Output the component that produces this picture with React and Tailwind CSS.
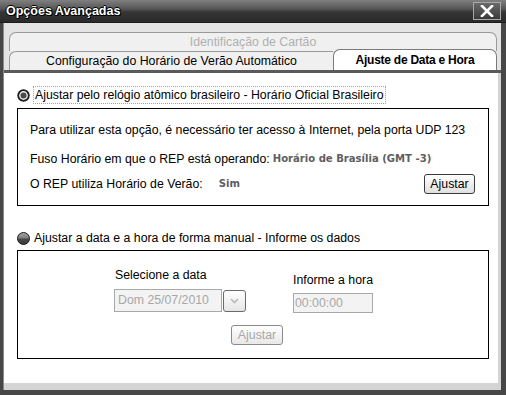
import React from "react";

function RadioOn() {
  return (
    <svg width="13" height="13" viewBox="0 0 13 13" className="shrink-0">
      <circle cx="6.5" cy="6.5" r="6.2" fill="#1e1e1e" />
      <circle cx="6.5" cy="6.5" r="4.4" fill="#ececec" />
      <circle cx="6.5" cy="6.5" r="3" fill="#4a4a4a" />
    </svg>
  );
}

function RadioOff() {
  return (
    <svg width="13" height="13" viewBox="0 0 13 13" className="shrink-0">
      <defs>
        <linearGradient id="rg" x1="0" y1="0" x2="0" y2="1">
          <stop offset="0" stopColor="#a8a8a8" />
          <stop offset="0.48" stopColor="#7c7c7c" />
          <stop offset="0.52" stopColor="#4a4a4a" />
          <stop offset="1" stopColor="#3a3a3a" />
        </linearGradient>
      </defs>
      <circle cx="6.5" cy="6.5" r="6" fill="url(#rg)" stroke="#1a1a1a" strokeWidth="1" />
    </svg>
  );
}

const boldGray = { fontFamily: '"DejaVu Sans Condensed", "DejaVu Sans", sans-serif' };

export default function App() {
  return (
    <div
      className="w-[506px] h-[395px] bg-[#474747] flex flex-col overflow-hidden"
      style={{ fontFamily: '"Liberation Sans", Arial, sans-serif' }}
    >
      {/* Title bar */}
      <div className="h-[23px] shrink-0 flex items-center justify-between pl-[6px] pr-[5px] bg-[linear-gradient(#808080_0%,#565656_40%,#353535_55%,#2a2a2a_100%)] border-b border-[#1c1c1c]">
        <span className="text-white font-bold text-[12.5px] leading-none [text-shadow:1px_1px_0_#000,-1px_0_0_#000,0_-1px_0_#000,1px_0_0_#000,0_1px_0_#000]">
          Opções Avançadas
        </span>
        <div className="w-[28px] h-[18px] mt-[-1px] border border-[#a8a8a8] bg-[linear-gradient(#6a6a6a,#3a3a3a)] flex items-center justify-center">
          <svg width="14" height="12" viewBox="0 0 14 12">
            <path d="M2 1 L12 11 M12 1 L2 11" stroke="#fff" strokeWidth="2.6" strokeLinecap="square" />
          </svg>
        </div>
      </div>

      {/* Body */}
      <div className="flex-1 ml-[3px] mr-[5px] mb-[5px] flex flex-col bg-[#e4e4e4] border-l border-[#8a8a8a]">
        {/* Tabs */}
        <div className="pt-[9px] pl-[5px] pr-[4px] flex flex-col">
          <div className="h-[19px] rounded-t-[7px] border border-b-0 border-[#9a9a9a] bg-[#f0f0f0] flex items-center justify-center text-[12.3px] text-[#b0b0b0]">
            Identificação de Cartão
          </div>
          <div className="flex h-[19px]">
            <div className="w-[324px] rounded-tl-[7px] border border-b-0 border-r-0 border-[#9a9a9a] bg-[#f0f0f0] flex items-center justify-center text-[12.3px] text-black">
              Configuração do Horário de Verão Automático
            </div>
            <div className="flex-1 -mt-[2px] rounded-t-[7px] border border-b-0 border-[#7a7a7a] bg-white flex items-center justify-center text-[12px] font-bold tracking-[-0.25px] text-black">
              Ajuste de Data e Hora
            </div>
          </div>
        </div>
        <div className="h-[3px] bg-[#5a5a5a]" />

        {/* Panel */}
        <div className="flex-1 bg-white border-b-[7px] border-r-[3px] border-[#d4d4d4] flex flex-col text-[12.3px] text-black">
          <div className="mt-[13px] ml-[13px] h-[18px] flex items-center">
            <RadioOn />
            <span className="ml-[3px] h-[18px] px-[1px] flex items-center border border-dotted border-[#e0a020]">
              Ajustar pelo relógio atômico brasileiro - Horário Oficial Brasileiro
            </span>
          </div>

          <div className="mt-[4px] ml-[13px] w-[472px] h-[98px] border border-black flex flex-col pl-[12px] pr-[13px]">
            <div className="mt-[13px] h-[16px] flex items-center">
              Para utilizar esta opção, é necessário ter acesso à Internet, pela porta UDP 123
            </div>
            <div className="mt-[13px] h-[16px] flex items-center">
              Fuso Horário em que o REP está operando:
              <span className="ml-[3px] font-bold text-[11.2px] text-[#5e5e5e]" style={boldGray}>
                Horário de Brasília (GMT -3)
              </span>
            </div>
            <div className="mt-[7px] h-[20px] flex items-center justify-between">
              <div className="flex items-center">
                O REP utiliza Horário de Verão:
                <span className="ml-[16px] font-bold text-[11.2px] text-[#5e5e5e]" style={boldGray}>
                  Sim
                </span>
              </div>
              <button className="w-[51px] h-[20px] rounded-[3px] border border-[#3a3a3a] bg-[linear-gradient(#ffffff,#e0e0e0)] text-[12.3px] text-black flex items-center justify-center">
                Ajustar
              </button>
            </div>
          </div>

          <div className="mt-[23px] ml-[13px] h-[18px] flex items-center">
            <RadioOff />
            <span className="ml-[4px]">Ajustar a data e a hora de forma manual - Informe os dados</span>
          </div>

          <div className="mt-[3px] ml-[13px] w-[472px] h-[109px] border border-black flex flex-col pl-[96px]">
            <div className="flex">
              <div className="w-[179px] flex flex-col pt-[16px]">
                <div className="h-[16px] flex items-center pl-[1px]">Selecione a data</div>
                <div className="mt-[6px] flex items-center">
                  <div className="w-[108px] h-[23px] border border-[#a8a8a8] bg-[#f3f3f3] flex items-center pl-[3px] text-[#a8a8a8]">
                    Dom 25/07/2010
                  </div>
                  <div className="ml-[1px] w-[23px] h-[22px] rounded-[3px] border border-[#6a6a6a] bg-[linear-gradient(#ffffff,#e6e6e6)] flex items-center justify-center">
                    <svg width="9" height="6" viewBox="0 0 9 6">
                      <path d="M1 1 L4.5 4.5 L8 1" stroke="#b8b8b8" strokeWidth="1.6" fill="none" />
                    </svg>
                  </div>
                </div>
              </div>
              <div className="flex flex-col pt-[21px]">
                <div className="h-[16px] flex items-center">Informe a hora</div>
                <div className="mt-[5px] w-[80px] h-[20px] border border-[#a8a8a8] bg-[#f3f3f3] flex items-center pl-[1px] text-[#a8a8a8]">
                  00:00:00
                </div>
              </div>
            </div>
            <button className="mt-[12px] ml-[117px] w-[52px] h-[20px] rounded-[3px] border border-[#8a8a8a] bg-[linear-gradient(#ffffff,#e8e8e8)] text-[12.3px] text-[#a8a8a8] flex items-center justify-center">
              Ajustar
            </button>
          </div>
        </div>
      </div>
    </div>
  );
}
